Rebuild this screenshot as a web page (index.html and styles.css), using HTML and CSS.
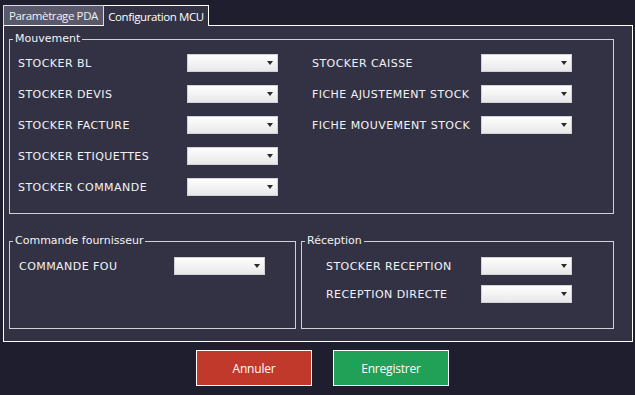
FILE: index.html
```html
<!DOCTYPE html>
<html lang="fr">
<head>
<meta charset="utf-8">
<title>Configuration MCU</title>
<link rel="stylesheet" href="styles.css">
</head>
<body>
<div class="tabs">
  <div class="tab">Paramètrage PDA</div>
  <div class="tab active">Configuration MCU</div>
</div>
<div class="page">
  <fieldset class="group mouvement">
    <legend>Mouvement</legend>
    <div class="cols">
      <div class="col">
        <div class="row"><span class="label">STOCKER BL</span><span class="combo"></span></div>
        <div class="row"><span class="label">STOCKER DEVIS</span><span class="combo"></span></div>
        <div class="row"><span class="label">STOCKER FACTURE</span><span class="combo"></span></div>
        <div class="row"><span class="label">STOCKER ETIQUETTES</span><span class="combo"></span></div>
        <div class="row"><span class="label">STOCKER COMMANDE</span><span class="combo"></span></div>
      </div>
      <div class="col">
        <div class="row"><span class="label">STOCKER CAISSE</span><span class="combo"></span></div>
        <div class="row"><span class="label">FICHE AJUSTEMENT STOCK</span><span class="combo"></span></div>
        <div class="row"><span class="label">FICHE MOUVEMENT STOCK</span><span class="combo"></span></div>
      </div>
    </div>
  </fieldset>
  <div class="lower">
    <fieldset class="group fournisseur">
      <legend>Commande fournisseur</legend>
      <div class="col">
        <div class="row"><span class="label short">COMMANDE FOU</span><span class="combo"></span></div>
      </div>
    </fieldset>
    <fieldset class="group reception">
      <legend>Réception</legend>
      <div class="col tight">
        <div class="row"><span class="label short">STOCKER RECEPTION</span><span class="combo"></span></div>
        <div class="row"><span class="label short">RECEPTION DIRECTE</span><span class="combo"></span></div>
      </div>
    </fieldset>
  </div>
</div>
<div class="actions">
  <button class="btn cancel">Annuler</button>
  <button class="btn save">Enregistrer</button>
</div>
</body>
</html>
```
FILE: styles.css
```css
* { box-sizing: border-box; }
html, body { margin: 0; padding: 0; }
body {
  width: 635px;
  height: 395px;
  background: #1f1e2e;
  font-family: "DejaVu Sans", Verdana, sans-serif;
  color: #f2f2f4;
  overflow: hidden;
}
.tabs {
  display: flex;
  padding: 5px 0 0 3px;
  height: 25px;
}
.tab {
  height: 20px;
  display: flex;
  align-items: center;
  justify-content: center;
  white-space: nowrap;
  font-family: "Open Sans", "Noto Sans", sans-serif;
  font-size: 11.5px;
  letter-spacing: -0.4px;
  color: #f0f0f0;
  background: #5a596b;
  border: 1px solid #d8d8de;
  border-bottom: none;
  width: 101px;
}
.tab.active {
  background: #333244;
  color: #ffffff;
  border: 1px solid #ffffff;
  border-bottom: none;
  border-left: none;
  width: 105px;
  height: 21px;
  position: relative;
  z-index: 1;
}
.page {
  margin: 0 2px 0 3px;
  width: 630px;
  height: 317px;
  border: 1px solid #ffffff;
  background: #333244;
  padding: 6px 18px 0 5px;
}
.group {
  margin: 0;
  border: 1px solid #cfcfd6;
  padding: 0;
  min-width: 0;
}
.group legend {
  margin-left: 3px;
  padding: 0 2px;
  font-size: 11px;
  line-height: 14px;
  color: #f2f2f4;
}
.cols {
  display: flex;
  gap: 34px;
  padding: 8px 0 17px 8px;
}
.col {
  display: flex;
  flex-direction: column;
  gap: 13px;
}
.col.tight { gap: 10px; }
.row {
  display: flex;
  align-items: center;
  height: 18px;
}
.label {
  width: 169px;
  font-size: 11px;
  letter-spacing: 0.45px;
  white-space: nowrap;
}
.label.short { width: 155px; }
.combo {
  width: 91px;
  height: 18px;
  border: 1px solid #d2d2d6;
  background: linear-gradient(#fefefe, #e8e8ea);
  display: flex;
  align-items: center;
  justify-content: flex-end;
  padding-right: 4px;
}
.combo::after {
  content: "";
  width: 0;
  height: 0;
  border-top: 4px solid #2a2a2a;
  border-left: 3.5px solid transparent;
  border-right: 3.5px solid transparent;
}
.lower {
  display: flex;
  gap: 5px;
  margin-top: 20px;
}
.fournisseur {
  width: 287px;
  height: 95px;
}
.fournisseur .col {
  padding: 9px 0 0 9px;
}
.reception {
  width: 313px;
  height: 95px;
}
.reception .col {
  padding: 9px 0 0 24px;
}
.actions {
  display: flex;
  justify-content: center;
  gap: 21px;
  padding: 8px 0 0 10px;
}
.btn {
  width: 116px;
  height: 36px;
  border: 1px solid #ffffff;
  color: #ffffff;
  font-family: "Open Sans", "Noto Sans", sans-serif;
  font-size: 12px;
  letter-spacing: -0.2px;
  cursor: pointer;
}
.cancel { background: #c0392b; }
.save { background: #21a057; }
```
